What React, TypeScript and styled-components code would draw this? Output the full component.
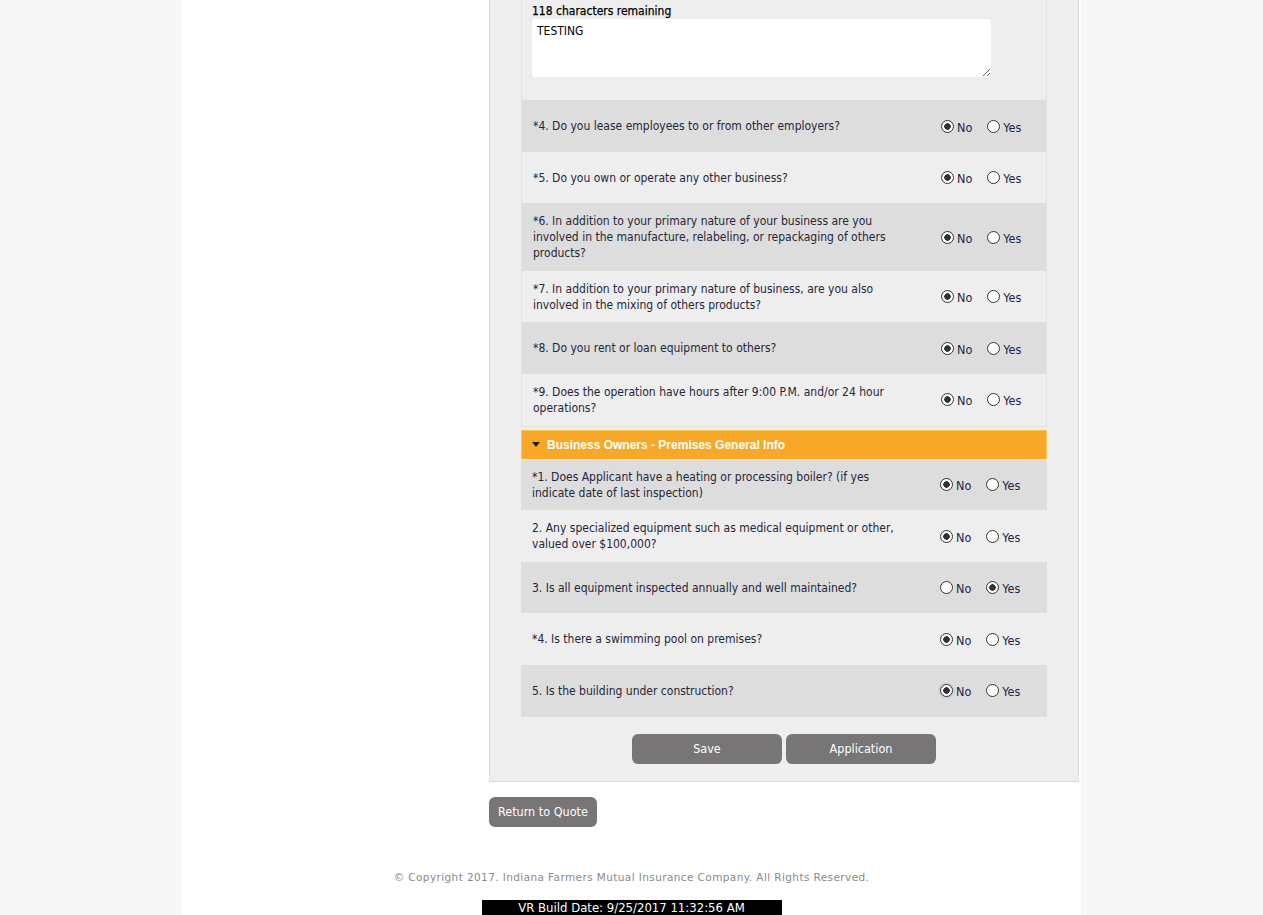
import * as React from 'react';
import styled, { createGlobalStyle } from 'styled-components';

const GlobalStyle = createGlobalStyle`
  html, body {
    margin: 0;
    padding: 0;
    background: #f7f7f7;
  }
  body {
    font-family: "DejaVu Sans Condensed", "DejaVu Sans", sans-serif;
    color: #26263a;
  }
`;

const Page = styled.div`
  width: 899px;
  margin: 0 auto;
  background: #fff;
  min-height: 915px;
  display: flex;
  flex-direction: column;
`;

const Main = styled.main`
  margin-left: 307px;
  width: 590px;
`;

const Panel = styled.section`
  background: #eeeeee;
  border: 1px solid #dddddd;
  border-top: none;
  padding: 0 31px 17px;
`;

const Group = styled.div<{ $bordered?: boolean }>`
  border: ${(p) => (p.$bordered ? '1px solid #e2e2e2' : 'none')};
  border-top: none;
`;

const Intro = styled.div`
  background: #eeeeee;
  padding: 4px 10px 23px;
`;

const Remaining = styled.div`
  font-size: 12px;
  font-weight: normal;
  color: #000;
  line-height: 15px;
  -webkit-text-stroke: 0.25px #000;
`;

const Comment = styled.textarea`
  display: block;
  box-sizing: border-box;
  width: 459px;
  height: 58px;
  margin: 0;
  border: none;
  border-radius: 4px;
  background: #fff;
  padding: 5px 5px;
  font-family: inherit;
  font-size: 12px;
  color: #000;
  resize: vertical;
  outline: none;
`;

const Row = styled.div<{ $shade: boolean }>`
  box-sizing: border-box;
  min-height: 51.6px;
  padding: 10px 0 9.6px 11px;
  display: flex;
  align-items: center;
  background: ${(p) => (p.$shade ? '#dddddd' : '#eeeeee')};
`;

const Question = styled.div`
  width: 372px;
  font-size: 12px;
  line-height: 16px;
  color: #26263a;
`;

const Choices = styled.div`
  margin-left: 36px;
  display: flex;
  align-items: center;
  gap: 15px;
  padding-top: 2px;
`;

const Choice = styled.label`
  display: flex;
  align-items: center;
  gap: 3px;
  font-size: 12.5px;
  color: #22224a;
`;

const Radio = styled.input.attrs({ type: 'radio' })<{ $focus?: boolean }>`
  appearance: none;
  margin: 0;
  width: 13px;
  height: 13px;
  border-radius: 50%;
  border: 1px solid #333;
  background: #fff;
  box-sizing: border-box;
  position: relative;
  top: -1px;
  box-shadow: ${(p) => (p.$focus ? '0 0 2px 1px #a9c9ea' : 'none')};
  &:checked {
    background: radial-gradient(circle, #333 0 3px, #fff 3.5px);
  }
`;

const SectionHeader = styled.div`
  margin-top: 3px;
  height: 29px;
  box-sizing: border-box;
  background: #f7a829;
  border: 1px solid #fbc94a;
  border-bottom: none;
  display: flex;
  align-items: center;
  padding-left: 10px;
  gap: 7px;
  font-family: "Liberation Sans", Arial, sans-serif;
  font-weight: bold;
  font-size: 12px;
  color: #fff;
`;

const Caret = styled.span`
  width: 0;
  height: 0;
  border-left: 4px solid transparent;
  border-right: 4px solid transparent;
  border-top: 5px solid #222;
`;

const Actions = styled.div`
  display: flex;
  justify-content: center;
  gap: 4px;
  margin-top: 17px;
`;

const Button = styled.button<{ $wide?: boolean }>`
  height: 30px;
  width: ${(p) => (p.$wide ? '150px' : 'auto')};
  padding: 0 9px;
  border: none;
  border-radius: 6px;
  background: #777575;
  color: #fff;
  font-family: inherit;
  font-size: 12.5px;
  cursor: pointer;
`;

const ReturnRow = styled.div`
  margin-top: 15px;
`;

const Footer = styled.footer`
  margin-top: 44px;
  text-align: center;
  font-family: "DejaVu Sans", Verdana, sans-serif;
  font-size: 10.5px;
  color: #8a8a8a;
  letter-spacing: 0.4px;
`;

const BuildDate = styled.div`
  margin: 17px auto 0;
  width: 300px;
  height: 16px;
  background: #000;
  color: #fff;
  text-align: center;
  font-size: 13px;
  line-height: 16px;
`;

type Item = { q: string; answer: 'No' | 'Yes'; focus?: boolean };

const operations: Item[] = [
  { q: '*4. Do you lease employees to or from other employers?', answer: 'No' },
  { q: '*5. Do you own or operate any other business?', answer: 'No' },
  {
    q: '*6. In addition to your primary nature of your business are you involved in the manufacture, relabeling, or repackaging of others products?',
    answer: 'No',
  },
  {
    q: '*7. In addition to your primary nature of business, are you also involved in the mixing of others products?',
    answer: 'No',
  },
  { q: '*8. Do you rent or loan equipment to others?', answer: 'No' },
  { q: '*9. Does the operation have hours after 9:00 P.M. and/or 24 hour operations?', answer: 'No' },
];

const premises: Item[] = [
  {
    q: '*1. Does Applicant have a heating or processing boiler? (if yes indicate date of last inspection)',
    answer: 'No',
  },
  {
    q: '2. Any specialized equipment such as medical equipment or other, valued over $100,000?',
    answer: 'No',
  },
  { q: '3. Is all equipment inspected annually and well maintained?', answer: 'Yes' },
  { q: '*4. Is there a swimming pool on premises?', answer: 'No' },
  { q: '5. Is the building under construction?', answer: 'No', focus: true },
];

function QuestionRow({ item, index, name }: { item: Item; index: number; name: string }) {
  const [value, setValue] = React.useState(item.answer);
  return (
    <Row $shade={index % 2 === 0}>
      <Question>{item.q}</Question>
      <Choices>
        {(['No', 'Yes'] as const).map((opt) => (
          <Choice key={opt}>
            <Radio
              name={name}
              checked={value === opt}
              $focus={item.focus && opt === 'No'}
              onChange={() => setValue(opt)}
            />
            {opt}
          </Choice>
        ))}
      </Choices>
    </Row>
  );
}

export default function App() {
  return (
    <>
      <GlobalStyle />
      <Page>
        <Main>
          <Panel>
            <Group $bordered>
              <Intro>
                <Remaining>118 characters remaining</Remaining>
                <Comment defaultValue="TESTING" />
              </Intro>
              {operations.map((item, i) => (
                <QuestionRow key={item.q} item={item} index={i} name={`op${i}`} />
              ))}
            </Group>

            <SectionHeader>
              <Caret />
              Business Owners - Premises General Info
            </SectionHeader>
            <Group>
              {premises.map((item, i) => (
                <QuestionRow key={item.q} item={item} index={i} name={`pr${i}`} />
              ))}
            </Group>

            <Actions>
              <Button $wide>Save</Button>
              <Button $wide>Application</Button>
            </Actions>
          </Panel>

          <ReturnRow>
            <Button>Return to Quote</Button>
          </ReturnRow>
        </Main>

        <Footer>© Copyright 2017. Indiana Farmers Mutual Insurance Company. All Rights Reserved.</Footer>
        <BuildDate>VR Build Date: 9/25/2017 11:32:56 AM</BuildDate>
      </Page>
    </>
  );
}
